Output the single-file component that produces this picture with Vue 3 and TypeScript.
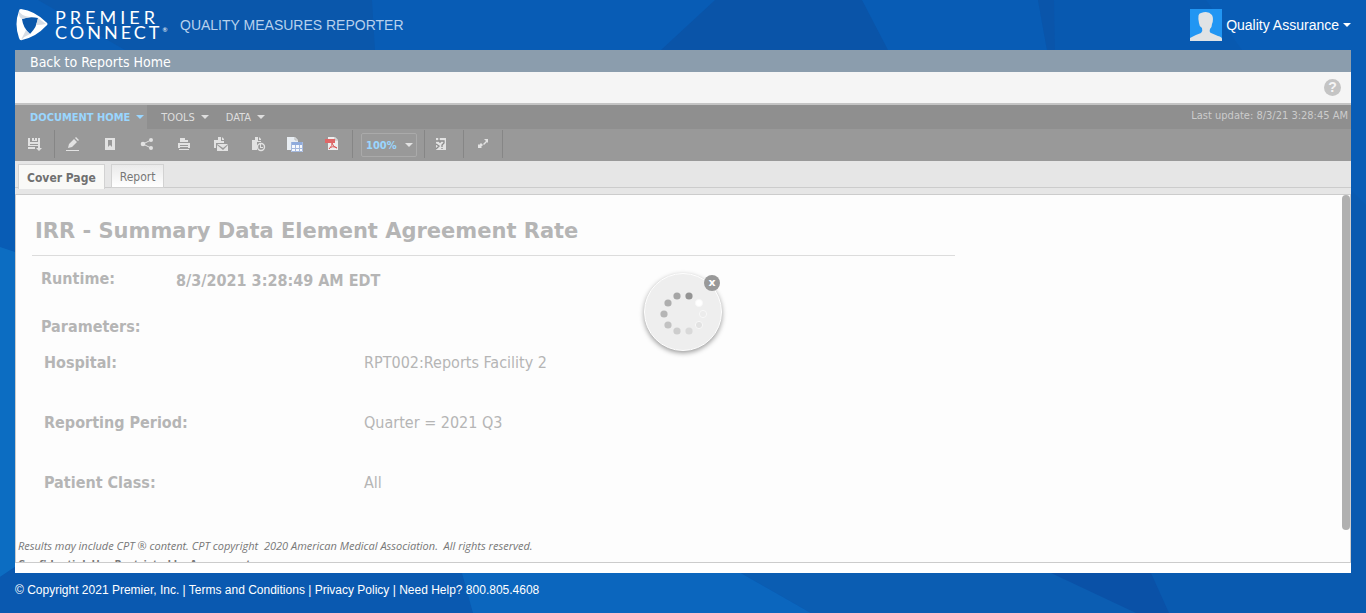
<script setup lang="ts">
import { ref } from 'vue'

interface Parameter { name: string; value: string }

const zoomLevel = ref<string>('100%')
const loading = ref<boolean>(true)
const activeTab = ref<string>('Cover Page')
const tabs: string[] = ['Cover Page', 'Report']
const menus: string[] = ['DOCUMENT HOME', 'TOOLS', 'DATA']
const parameters: Parameter[] = [
  { name: 'Hospital:', value: 'RPT002:Reports Facility 2' },
  { name: 'Reporting Period:', value: 'Quarter = 2021 Q3' },
  { name: 'Patient Class:', value: 'All' },
]
const dots: { x: number; y: number; c: string }[] = [
  { x: 44, y: 22, c: '#949494' }, { x: 32, y: 22, c: '#a5a5a5' },
  { x: 23, y: 29, c: '#aeaeae' }, { x: 19, y: 40, c: '#b5b5b5' },
  { x: 23, y: 51, c: '#c2c2c2' }, { x: 32, y: 57, c: '#cdcdcd' },
  { x: 44, y: 57, c: '#d9d9d9' }, { x: 54, y: 51, c: '#e2e2e2' },
  { x: 58, y: 40, c: '#ececec' }, { x: 54, y: 29, c: '#ffffff' },
]
</script>

<template>
  <div class="page">
    <svg class="backdrop" viewBox="0 0 1366 613" preserveAspectRatio="none" aria-hidden="true">
      <rect width="1366" height="613" fill="#085cb5" />
      <path d="M38 0H372L375 50H125Z" fill="#0a57ab" />
      <path d="M715 0H862L888 50H661Z" fill="#0a54a8" />
      <path d="M1038 0H1206L1242 50H1047Z" fill="#0859b0" />
      <path d="M1038 0H1054L1055 50H1047Z" fill="#0a55aa" />
      <path d="M1351 190L1366 205V613H1351Z" fill="#095ab0" />
      <path d="M0 247L15 252V567L0 577Z" fill="#0c6dc2" />
      <path d="M0 577L15 567V573H462L473 613H0Z" fill="#0a59b0" />
      <path d="M462 573H741L811 613H473Z" fill="#0b66be" />
      <path d="M741 573H1366V613H811Z" fill="#0b5db2" />
      <path d="M1051 573H1366V613H1136Z" fill="#0a51a7" />
      <path d="M1151 573H1366V613H1169Z" fill="#095ab0" />
    </svg>

    <header class="top">
      <a class="brand" href="#" aria-label="Premier Connect">
        <svg width="32" height="34" viewBox="0 0 32 34" aria-hidden="true">
          <path d="M5 1Q19 3 30 14Q33 16 30 18Q20 29 6 32Q4 33 3 30Q-2 16 3 3Q3 1 5 1Z" fill="#fff" />
          <path d="M6 11Q14 8 22 10Q21 19 14 26Q7 20 6 11Z" fill="#0a57ab" />
          <path d="M3 3Q2 8 6 11L14 9Q5 8 3 3ZM22 10L30 16Q26 17 20 17ZM14 26Q9 28 5 32Q8 26 10 22Z" fill="#d5dce5" />
        </svg>
        <span class="brand-name"><span class="upper">PREMIER</span><span>CONNECT<sup>®</sup></span></span>
      </a>
      <span class="product">QUALITY MEASURES REPORTER</span>
      <button class="user" type="button">
        <svg width="32" height="32" viewBox="0 0 32 32" aria-hidden="true">
          <rect width="32" height="32" fill="#2196f3" />
          <path d="M0 32V29Q5 26 11 24Q13 22 12 19Q9 17 9 14Q7 4 11 4Q18 1 22 6Q24 10 22 15Q22 18 20 20Q19 23 21 24L28 27Q32 28 32 30V32Z" fill="#e0e3e5" />
        </svg>
        <span>Quality Assurance</span><i class="caret"></i>
      </button>
    </header>

    <main class="frame">
      <nav class="back"><a href="#">Back to Reports Home</a></nav>
      <div class="helpbar">
        <button type="button" class="help" aria-label="Help">?</button>
      </div>
      <div class="menubar">
        <button v-for="(m, i) in menus" :key="m" type="button" :class="['menu', { current: i === 0 }]">
          {{ m }}<i class="caret"></i>
        </button>
        <span class="updated">Last update: 8/3/21 3:28:45 AM</span>
      </div>
      <div class="toolbar">
        <div class="group first">
          <button type="button" aria-label="Save"><svg viewBox="0 0 16 16"><path d="M1 1H3V5H11V1H13V9H1ZM5 1H7V3H8V1H10V4H5ZM3 7V8H11V7ZM1 10H8V12H1ZM11 9H13V11H15L12 14L9 11H11Z" fill-rule="evenodd" /></svg></button>
        </div>
        <div class="group tools">
          <button type="button" aria-label="Edit"><svg viewBox="0 0 16 16"><path d="M4 7L9 2L12 5L7 10L3 11ZM10 1L11 0L14 3L13 4ZM1 13H14V14H1Z" /></svg></button>
          <button type="button" aria-label="Bookmark"><svg viewBox="0 0 16 16"><path d="M3 1H13V13H3ZM6 3V10L8 8L10 10V3Z" fill-rule="evenodd" /></svg></button>
          <button type="button" aria-label="Share"><svg viewBox="0 0 16 16"><path d="M4 7L12 3M4 7L12 11" stroke="currentColor" stroke-width="1" /><circle cx="4" cy="7" r="2.3" /><circle cx="12" cy="3" r="2" /><circle cx="12" cy="11" r="2" /></svg></button>
          <button type="button" aria-label="Print"><svg viewBox="0 0 16 16"><path d="M4 1H9V3H12V5H4ZM2 6H14V11H12V8H4V11H2ZM4 9H12V10H4ZM3 12H13V13H3Z" /></svg></button>
          <button type="button" aria-label="Email"><svg viewBox="0 0 16 16"><path d="M5 0H8V4H11V6H3V11H1V3H5ZM9 0L11 2V3H9ZM4 7H15L10 11ZM4 8L10 13L15 8V14H4Z" /></svg></button>
          <button type="button" aria-label="Schedule"><svg viewBox="0 0 16 16"><path d="M5 0H8V4H11V5H7V13H2V3H5ZM9 0L11 2V3H9Z" /><circle cx="11" cy="10" r="3.5" fill="none" stroke="currentColor" stroke-width="1.4" /><path d="M10 7H11V10H13V11H10Z" /></svg></button>
          <button type="button" aria-label="Export to spreadsheet"><svg viewBox="0 0 16 16"><path d="M0 0H8L11 3V13H0Z" fill="#e8edf2" /><path d="M8 0V3H11" fill="none" stroke="#bbb" /><path d="M4 5H16V15H4Z" fill="#f5f8fd" /><path d="M4 5H16V8H4Z" fill="#8fabdc" /><path d="M4.500 5V14.500H15.500V5M8.500 8V15M12.500 8V15M4 11.500H16" fill="none" stroke="#a4b8dd" /></svg></button>
          <button type="button" aria-label="Export to PDF"><svg viewBox="0 0 16 16"><path d="M4 0H11L14 3V13H4Z" fill="#eee" /><path d="M11 0V3H14" fill="none" stroke="#bbb" /><path d="M1 2H11V6H1Z" fill="#df6767" /><path d="M5 12Q9 8 8 6Q9 10 13 11Q8 8 5 12Z" fill="none" stroke="#dc5555" /></svg></button>
        </div>
        <div class="group zoom">
          <label class="zoombox"><select v-model="zoomLevel" aria-label="Zoom"><option>100%</option><option>75%</option><option>50%</option></select><i class="caret"></i></label>
        </div>
        <div class="group single details">
          <button type="button" aria-label="Report details"><svg viewBox="0 0 16 16"><path d="M3 1H13V13H3Z" /><path d="M3 4H6V1M3 7L6 9L3 12M7 6V4H11V6L9 8V10M9 11V12" fill="none" stroke="#8a8a8a" stroke-width="1.3" /></svg></button>
        </div>
        <div class="group single">
          <button type="button" aria-label="Full screen"><svg viewBox="0 0 16 16"><path d="M9 2H13V6L12 5L9 8L8 7L11 4ZM3 7L4 8L6 6L8 8L6 10L7 11H3Z" /></svg></button>
        </div>
      </div>
      <div class="tabs" role="tablist">
        <button v-for="t in tabs" :key="t" type="button" role="tab" :aria-selected="activeTab === t" :class="['tab', { active: activeTab === t }]" @click="activeTab = t">{{ t }}</button>
      </div>

      <section class="report">
        <div class="content">
          <h1>IRR - Summary Data Element Agreement Rate</h1>
          <div class="runtime"><b>Runtime:</b><b class="stamp">8/3/2021 3:28:49 AM EDT</b></div>
          <h2>Parameters:</h2>
          <dl>
            <div v-for="p in parameters" :key="p.name"><dt>{{ p.name }}</dt><dd>{{ p.value }}</dd></div>
          </dl>
          <p class="note">Results may include CPT ® content. CPT copyright&nbsp; 2020 American Medical Association.&nbsp; All rights reserved.</p>
          <p class="confidential">Confidential: Use Restricted by Agreement</p>
        </div>
        <div class="thumb"></div>
        <div v-if="loading" class="spinner" role="status" aria-label="Loading">
          <svg viewBox="0 0 76 76" aria-hidden="true"><circle v-for="(d, i) in dots" :key="i" :cx="d.x" :cy="d.y" r="3.6" :fill="d.c" :stroke="i > 6 ? '#f8f8f8' : 'none'" /></svg>
          <button type="button" class="close" aria-label="Cancel" @click="loading = false">x</button>
        </div>
      </section>
    </main>

    <footer>© Copyright 2021 Premier, Inc. | <a href="#">Terms and Conditions</a> | <a href="#">Privacy Policy</a> | Need Help? 800.805.4608</footer>
  </div>
</template>

<style>
body { margin: 0; background: #085cb5; }
</style>

<style scoped>
.page { position: relative; min-height: 100vh; display: flex; flex-direction: column; font-family: "DejaVu Sans Condensed", "DejaVu Sans", sans-serif; isolation: isolate; overflow: hidden; }
.page * { box-sizing: border-box; }
.backdrop { position: absolute; inset: 0; width: 100%; height: 100%; z-index: -1; }
button { font: inherit; border: 0; padding: 0; background: none; color: inherit; cursor: pointer; }
a { color: inherit; text-decoration: none; }
.caret { display: inline-block; border: 4px solid transparent; border-top-color: currentColor; border-bottom: 0; }
.top { height: 50px; padding: 0 15px 0 16px; display: flex; align-items: center; color: #fff; font-family: "Liberation Sans", Arial, sans-serif; }
.brand { display: flex; align-items: center; gap: 7px; width: 164px; }
.brand-name { display: flex; flex-direction: column; font-family: Lato, sans-serif; font-size: 18px; line-height: 15px; letter-spacing: 3px; }
.brand-name .upper { letter-spacing: 4px; }
.brand-name sup { font-size: 6px; line-height: 0; letter-spacing: 0; }
.product { font-size: 14px; line-height: 20px; color: #b7d1ed; }
.user { margin-left: auto; display: flex; align-items: center; gap: 4px; font-size: 14px; }
.frame { flex: 1; margin: 0 15px; padding-bottom: 10px; background: #fff; display: flex; flex-direction: column; }
.back { height: 22px; padding: 1px 0 0 15px; background: #8b9dad; color: #fff; font-size: 14px; line-height: 23px; }
.helpbar { height: 33px; padding: 0 10px; display: flex; align-items: center; justify-content: flex-end; background: #f5f5f5; border-bottom: 2px solid #c4c4c4; }
.help { width: 17px; height: 17px; border-radius: 50%; background: #c4c4c4; color: #f5f5f5; font: bold 14px/17px "Liberation Sans", sans-serif; }
.menubar { height: 24px; display: flex; background: #8f8f8f; color: #dedede; font-size: 11px; }
.menu { display: flex; align-items: center; gap: 6px; padding: 0 3px 0 14px; }
.menu.current { padding-left: 15px; font-weight: bold; color: #99d6ff; background: #999; }
.updated { margin-left: auto; padding-right: 3px; line-height: 22px; color: #ccc; }
.toolbar { height: 32px; display: flex; background: #999; color: #e2e2e2; }
.group { display: flex; align-items: center; border-right: 1px solid #868686; margin: 1px 0 3px; padding-top: 2px; }
.group svg { display: block; width: 16px; height: 16px; fill: currentColor; }
.first { width: 40px; padding-left: 12px; }
.tools { width: 298px; padding-left: 10px; gap: 21px; }
.zoom { width: 72px; padding-left: 8px; }
.zoombox { width: 56px; height: 24px; display: flex; align-items: center; border: 1px solid #aaa; border-radius: 2px; }
.zoombox select { appearance: none; border: 0; padding: 0 0 0 4px; width: 43px; background: none; color: #99d6ff; font: bold 11px "DejaVu Sans Condensed", sans-serif; }
.single { width: 39px; justify-content: center; }
.details { justify-content: flex-start; padding-left: 8px; }
.tabs { height: 34px; padding: 3px 3px 0; display: flex; gap: 6px; background: linear-gradient(#e6e6e6 26px, #ccc 26px, #ccc 27px, #e6e6e6 27px, #e6e6e6 33px, #ccc 33px); }
.tab { height: 24px; padding: 1px 8px 0; border: 1px solid #d2d2d2; background: linear-gradient(#eaeaea, #fff); color: #777; font-size: 12px; }
.tab.active { height: 25px; background: #f9f9f7; border-bottom: 0; font-weight: bold; color: #707070; }
.report { position: relative; flex: 1 1 0; min-height: 368px; border: 1px solid #ccc; border-top: 0; overflow: hidden; background: #fdfdfd; }
.content { height: 368px; overflow: hidden; color: #b5b5b5; font-size: 16px; line-height: 20px; }
h1 { margin: 0 395px 0 16px; padding: 22px 0 10px 3px; height: 61px; border-bottom: 1px solid #dcdcdc; font: bold 21px/28px "DejaVu Sans", Verdana, sans-serif; }
.runtime { display: flex; padding: 13px 0 0 25px; }
.runtime b { width: 135px; }
.runtime .stamp { width: auto; padding-top: 2px; }
h2 { margin: 26px 0 0 25px; font-size: 16px; line-height: 20px; }
dl { margin: 16px 0 0 28px; }
dl div { display: flex; height: 60px; }
dt { width: 320px; font-weight: bold; }
dd { margin: 0; }
.note { margin: 5px 0 0 2px; font: italic 11px/16px "Open Sans", sans-serif; color: #777; }
.confidential { margin: 3px 0 0 2px; font: bold 11px/14px "Open Sans", sans-serif; color: #777; }
.thumb { position: absolute; right: 0; top: 0; width: 8px; height: 335px; background: #b0b0b0; border-radius: 4px; }
.spinner { position: absolute; left: 50%; top: 78px; width: 78px; height: 78px; margin-left: -39px; border: 1px solid #fff; border-radius: 50%; background: #eee; box-shadow: 0 2px 5px #999; }
.spinner svg { display: block; width: 100%; height: 100%; }
.close { position: absolute; right: 1px; top: 1px; width: 16px; height: 16px; border-radius: 50%; background: #999; color: #fff; font: bold 11px/14px "DejaVu Sans", sans-serif; }
footer { height: 40px; padding-left: 15px; color: #fff; font: 12px/34px "Liberation Sans", Arial, sans-serif; }
</style>
